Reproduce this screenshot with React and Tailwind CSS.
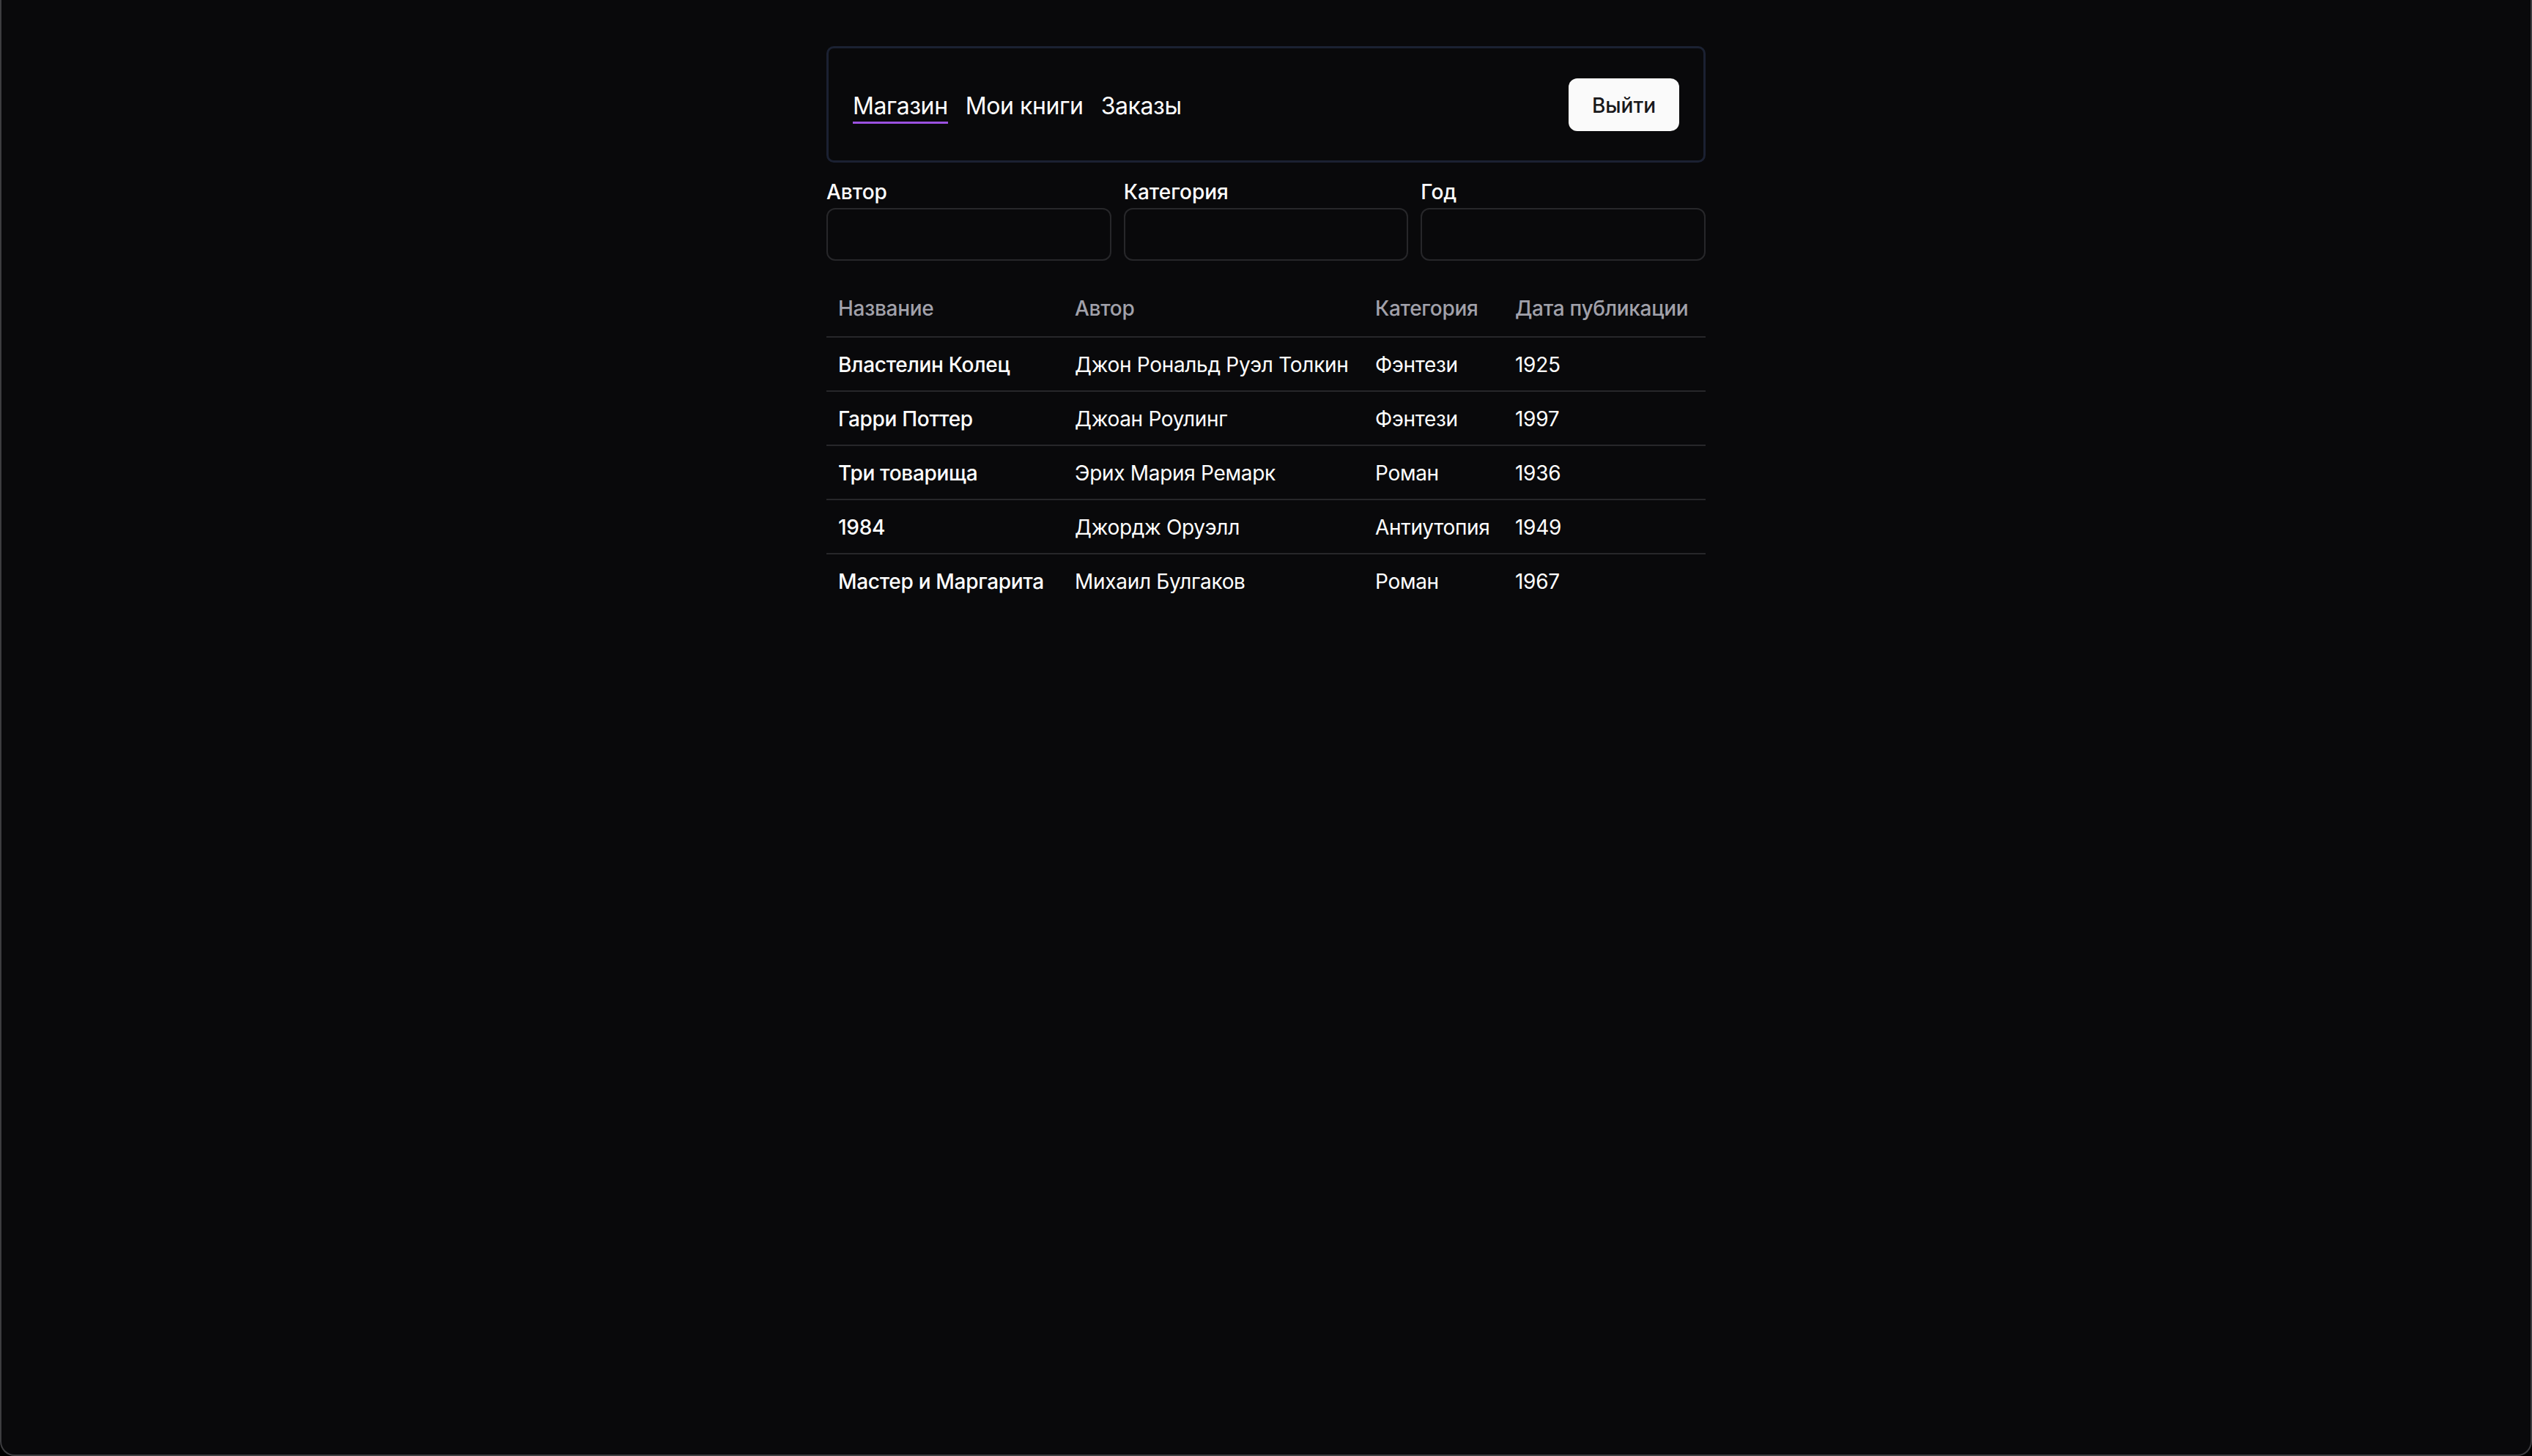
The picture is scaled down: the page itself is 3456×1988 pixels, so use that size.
const books = [
  { title: 'Властелин Колец', author: 'Джон Рональд Руэл Толкин', category: 'Фэнтези', year: '1925' },
  { title: 'Гарри Поттер', author: 'Джоан Роулинг', category: 'Фэнтези', year: '1997' },
  { title: 'Три товарища', author: 'Эрих Мария Ремарк', category: 'Роман', year: '1936' },
  { title: '1984', author: 'Джордж Оруэлл', category: 'Антиутопия', year: '1949' },
  { title: 'Мастер и Маргарита', author: 'Михаил Булгаков', category: 'Роман', year: '1967' },
];

const tabs = ['Магазин', 'Мои книги', 'Заказы'];

export default function App() {
  return (
    <div className="h-screen w-full bg-black" style={{ fontFamily: 'Inter, "Noto Sans", sans-serif' }}>
      <div className="h-full w-full bg-[#09090b] border-x-2 border-b-2 border-[#3d3d40] rounded-b-[20px] pt-[63px]">
        <div className="w-[1200px] mx-auto">
          {/* Nav */}
          <div className="h-[159px] border-[3px] border-[#1b2132] rounded-[10px] px-[33px] flex items-center justify-between">
            <div className="flex gap-[24px] pt-[9px]">
              {tabs.map((t, i) => (
                <button
                  key={t}
                  className={`text-[32px] leading-[40px] tracking-[-0.4px] text-white pb-[1px] border-b-[3px] ${i === 0 ? 'border-[#9b51e0]' : 'border-transparent'}`}
                >
                  {t}
                </button>
              ))}
            </div>
            <button className="w-[151px] h-[72px] rounded-[12px] bg-[#fafafa] text-[#18181b] text-[28px] font-medium pt-[2px]">
              Выйти
            </button>
          </div>

          {/* Filters */}
          <div className="mt-[26px] grid grid-cols-3 gap-[17px]">
            {['Автор', 'Категория', 'Год'].map((l) => (
              <label key={l} className="flex flex-col">
                <span className="text-[28px] leading-[28px] font-medium text-white mb-[8px]">{l}</span>
                <input className="h-[72px] border-2 border-[#27272a] rounded-[12px] bg-transparent px-[24px] text-[28px] text-white outline-none" />
              </label>
            ))}
          </div>

          {/* Table */}
          <table className="mt-[24px] w-full table-fixed border-collapse tracking-[-0.3px]">
            <colgroup>
              <col className="w-[323px]" />
              <col className="w-[410px]" />
              <col className="w-[191px]" />
              <col />
            </colgroup>
            <thead>
              <tr className="border-b-2 border-[#27272a]">
                {['Название', 'Автор', 'Категория', 'Дата публикации'].map((h) => (
                  <th key={h} className="h-[80px] px-[16px] pt-[2px] text-left text-[28px] font-medium text-[#a1a1aa] whitespace-nowrap">
                    {h}
                  </th>
                ))}
              </tr>
            </thead>
            <tbody>
              {books.map((b, i) => (
                <tr key={b.title} className={i < books.length - 1 ? 'border-b-2 border-[#27272a]' : ''}>
                  <td className="px-[16px] pt-[17px] pb-[15px] text-[28px] leading-[40px] font-medium text-white whitespace-nowrap">{b.title}</td>
                  <td className="px-[16px] pt-[17px] pb-[15px] text-[28px] leading-[40px] text-white whitespace-nowrap">{b.author}</td>
                  <td className="px-[16px] pt-[17px] pb-[15px] text-[28px] leading-[40px] text-white whitespace-nowrap">{b.category}</td>
                  <td className="px-[16px] pt-[17px] pb-[15px] text-[28px] leading-[40px] text-white whitespace-nowrap">{b.year}</td>
                </tr>
              ))}
            </tbody>
          </table>
        </div>
      </div>
    </div>
  );
}
